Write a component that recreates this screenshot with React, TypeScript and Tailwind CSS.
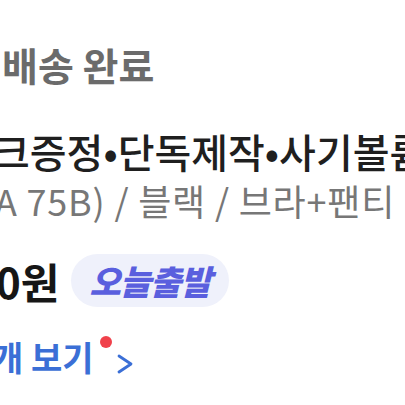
export default function App() {
  return (
    <div
      className="w-[405px] h-[405px] overflow-hidden bg-white flex flex-col"
      style={{ fontFamily: '"Noto Sans CJK KR", "Noto Sans", sans-serif' }}
    >
      <div className="mt-[38px] ml-[2px] whitespace-nowrap text-[39px] leading-[52px] font-semibold text-[#6b6b6b]">
        배송 완료
      </div>

      <div className="mt-[38px] ml-[-7px] whitespace-nowrap text-[40px] leading-[46px] font-medium text-[#1f1f1f]">
        크증정•단독제작•사기볼륨
      </div>

      <div className="mt-[4px] ml-[-5px] whitespace-nowrap text-[36px] leading-[44px] text-[#777777] tracking-[0.8px]">
        A 75B) / 블랙 / 브라+팬티
      </div>

      <div className="mt-[32px] ml-[-4px] flex items-center gap-[12px] whitespace-nowrap">
        <span className="text-[42px] leading-[52px] font-bold text-[#161616]">0원</span>
        <span className="h-[53px] px-[18px] rounded-full bg-[#eff1fb] flex items-center">
          <span className="text-[34px] leading-none font-extrabold italic text-[#5a5fde] tracking-[-1px]">
            오늘출발
          </span>
        </span>
      </div>

      <div className="mt-[26px] ml-[-8px] flex items-center whitespace-nowrap">
        <span className="relative text-[34px] leading-[48px] font-semibold text-[#3b6fd6]">
          개 보기
          <span className="absolute right-[-18px] top-[3px] w-[12px] h-[12px] rounded-full bg-[#f0414b]" />
        </span>
        <svg className="ml-[22px] mt-[14px]" width="18" height="22" viewBox="0 0 18 22" fill="none">
          <path d="M3 3 L15 11 L3 19" stroke="#3b6fd6" strokeWidth="2.8" strokeLinecap="round" strokeLinejoin="round" />
        </svg>
      </div>
    </div>
  );
}
